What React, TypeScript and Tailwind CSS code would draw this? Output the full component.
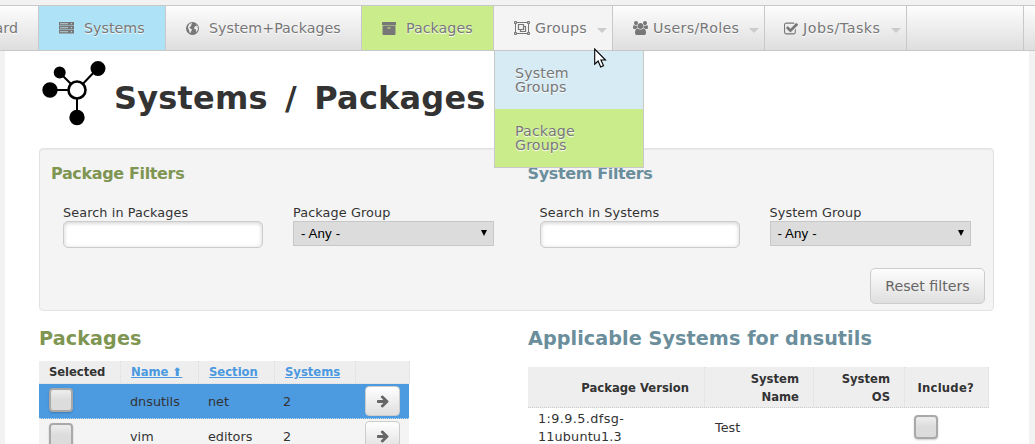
import React from "react";

const ARCHIVE =
  "M1088 832q0-26-19-45t-45-19h-256q-26 0-45 19t-19 45 19 45 45 19h256q26 0 45-19t19-45zm576-192v960q0 26-19 45t-45 19h-1408q-26 0-45-19t-19-45v-960q0-26 19-45t45-19h1408q26 0 45 19t19 45zm64-448v256q0 26-19 45t-45 19h-1536q-26 0-45-19t-19-45v-256q0-26 19-45t45-19h1536q26 0 45 19t19 45z";
const USERS =
  "M593 896q-162 5-265 128h-134q-82 0-138-40.5t-56-118.5q0-353 124-353 6 0 43.5 21t97.5 42.5 119 21.5q67 0 133-23-5 37-5 66 0 139 81 256zm1071 637q0 120-73 189.5t-194 69.5h-874q-121 0-194-69.5t-73-189.5q0-53 3.5-103.5t14-109 26.5-108.5 43-97.5 62-81 85.5-53.5 111.5-20q10 0 43 21.5t73 48 107 48 135 21.5 135-21.5 107-48 73-48 43-21.5q61 0 111.5 20t85.5 53.5 62 81 43 97.5 26.5 108.5 14 109 3.5 103.5zm-1024-1277q0 106-75 181t-181 75-181-75-75-181 75-181 181-75 181 75 75 181zm704 384q0 159-112.5 271.5t-271.5 112.5-271.5-112.5-112.5-271.5 112.5-271.5 271.5-112.5 271.5 112.5 112.5 271.5zm576 225q0 78-56 118.5t-138 40.5h-134q-103-123-265-128 81-117 81-256 0-29-5-66 66 23 133 23 59 0 119-21.5t97.5-42.5 43.5-21q124 0 124 353zm-128-609q0 106-75 181t-181 75-181-75-75-181 75-181 181-75 181 75 75 181z";
const CHECK =
  "M1408 930v318q0 119-84.5 203.5t-203.5 84.5h-832q-119 0-203.5-84.5t-84.5-203.5v-832q0-119 84.5-203.5t203.5-84.5h832q63 0 117 25 15 7 18 23 3 17-9 29l-49 49q-10 10-23 10-3 0-9-2-23-6-45-6h-832q-66 0-113 47t-47 113v832q0 66 47 113t113 47h832q66 0 113-47t47-113v-254q0-13 9-22l64-64q10-10 23-10 6 0 12 3 20 8 20 29zm231-489l-814 814q-24 24-57 24t-57-24l-430-430q-24-24-24-57t24-57l110-110q24-24 57-24t57 24l263 263 647-647q24-24 57-24t57 24l110 110q24 24 24 57t-24 57z";
const ARROW =
  "M1600 960q0 54-37 91l-651 651q-39 37-91 37-51 0-90-37l-75-75q-38-38-38-91t38-91l293-293h-704q-52 0-84.5-37.5t-32.5-90.5v-128q0-53 32.5-90.5t84.5-37.5h704l-293-294q-38-36-38-90t38-90l75-75q38-38 90-38 53 0 91 38l651 651q37 35 37 90z";

function ServerIcon() {
  return (
    <svg className="w-[15px] h-3 shrink-0" viewBox="0 0 15 12" fill="#777">
      {[0, 4, 8].map((y) => (
        <g key={y}>
          <rect x="0" y={y} width="15" height="3.5" />
          <path d={`M1 ${y + 1.7}h8`} stroke="#c5dfe9" strokeWidth="0.8" />
          <circle cx="12.4" cy={y + 1.7} r="0.6" fill="#c5dfe9" />
        </g>
      ))}
    </svg>
  );
}

function GlobeIcon() {
  return (
    <svg className="w-[13px] h-[13px] shrink-0" viewBox="0 0 12 12">
      <circle cx="6" cy="6" r="6" fill="#777" />
      <path
        d="M4.8 1 5.6 1.5 4.8 2.2 5.2 2.9 4.2 3.6 4 4.6 3 4.9 3.6 5.8 5.2 6.6 5.6 7.4 4.6 8.6 4.2 10.2 3.2 9.6 2.9 7.6 2.1 6.2 1.8 4.4Q2.6 1.8 4.8 1zM8.4 1.8 10 3.2 9.6 4 8.6 3.8 7.9 4.7 7.4 5.7 8 6.8 9.2 6.8 9.4 8.4 9 9.6Q10.9 8.2 11.1 6.2L10.6 4.8 10.9 4.4Q10.2 2.4 8.4 1.8z"
        fill="#eee"
      />
    </svg>
  );
}

function ObjectGroupIcon() {
  return (
    <svg className="w-4 h-[14px] shrink-0" viewBox="0 0 16 14" fill="none" stroke="#777">
      <path d="M2 1.5h12M2 12.5h12M1.5 2v10M14.5 2v10" />
      <path d="M.5.5h2v2h-2zM13.5.5h2v2h-2zM.5 11.5h2v2h-2zM13.5 11.5h2v2h-2z" fill="#ccc" />
      <path d="M4.5 3.5h5v5h-5zM9.5 5.5h2v5h-5v-2" strokeWidth="1.2" />
    </svg>
  );
}

function Glyph({ d, box, className }: { d: string; box: string; className: string }) {
  return (
    <svg className={className} viewBox={box} fill="#777">
      <path d={d} />
    </svg>
  );
}

function Caret() {
  return (
    <svg className="w-[10px] h-[5px] shrink-0 mt-[5px]" viewBox="0 0 10 5">
      <path d="M0 0h10L5 5z" fill="#ccc" />
    </svg>
  );
}

function Arrow() {
  return (
    <button className="flex w-[35px] h-[30px] shrink-0 items-center justify-center rounded-[4px] border border-[#ccc] bg-linear-to-b from-white to-[#dfdfdf]">
      <svg className="w-[14px] h-[14px]" viewBox="0 0 1792 1792" fill="#666">
        <path d={ARROW} />
      </svg>
    </button>
  );
}

function Check() {
  return (
    <span className="block size-6 shrink-0 rounded-[4px] border-2 border-[#a9a9a9] bg-linear-to-b from-[#ebebeb] from-10% to-[#dcdcdc] to-50% shadow-[0_1px_2px_rgba(0,0,0,0.2)]" />
  );
}

const cell =
  "flex h-full shrink-0 items-center border-r border-[#c8c8c8] whitespace-nowrap";

function Nav() {
  return (
    <nav className="flex h-[46px] w-full overflow-hidden border-y border-[#c8c8c8] bg-linear-to-b from-[#fdfdfd] to-[#dedede] text-[14.2px] leading-[14px] tracking-[0.05px] text-[#777] [text-shadow:0_1px_1px_#fff]">
      <div className={`${cell} w-[39px] justify-end pr-5`}>Dashboard</div>
      <div className={`${cell} w-[127px] bg-[#aee2f6] pl-5 gap-[10px]`}>
        <ServerIcon />
        <span>Systems</span>
      </div>
      <div className={`${cell} w-[196px] pl-5 gap-[10px]`}>
        <GlobeIcon />
        <span>System+Packages</span>
      </div>
      <div className={`${cell} w-[132px] bg-[#caec8a] pl-5 gap-[10px]`}>
        <Glyph d={ARCHIVE} box="64 128 1664 1536" className="w-[14px] h-[13px] shrink-0" />
        <span>Packages</span>
      </div>
      <div className={`${cell} w-[119px] bg-[#f4f4f4] pl-5`}>
        <ObjectGroupIcon />
        <span className="w-[67px] pl-[5px] tracking-[0.2px]">Groups</span>
        <Caret />
      </div>
      <div className={`${cell} w-[152px] pl-5`}>
        <Glyph d={USERS} box="0 0 1920 1792" className="w-[15px] h-[14px] shrink-0" />
        <span className="w-[101px] pl-[5px] tracking-[0.35px]">Users/Roles</span>
        <Caret />
      </div>
      <div className={`${cell} w-[142px] pl-[19px]`}>
        <Glyph d={CHECK} box="0 64 1664 1536" className="w-[14px] h-[13px] shrink-0" />
        <span className="w-[93px] pl-[5px] tracking-[0.55px]">Jobs/Tasks</span>
        <Caret />
      </div>
      <div className={`${cell} w-[117px]`} />
    </nav>
  );
}

function Logo() {
  return (
    <svg className="w-16 h-[66px] shrink-0" viewBox="0 0 64 66" stroke="#000" strokeWidth="2">
      <path d="M35 30 56 8M35 30 17.5 12.5M35 30H8M35 30V57" />
      <circle cx="56" cy="8.5" r="6.5" />
      <circle cx="17.7" cy="12.5" r="5" />
      <circle cx="8" cy="30" r="6.7" />
      <circle cx="35" cy="57.5" r="6.7" />
      <circle cx="35" cy="30" r="8.5" fill="#fff" strokeWidth="2.6" />
    </svg>
  );
}

function Filter({ title, color, search, group }: { title: string; color: string; search: string; group: string }) {
  return (
    <section className="w-[477px] pl-[11px] pt-[14px]">
      <h3 className={`text-[16px] leading-[22px] font-bold tracking-[-0.36px] ${color}`}>{title}</h3>
      <div className="mt-[19px] flex pl-3 text-[12.8px] leading-[17px] tracking-[0.1px]">
        <label className="w-[230px]">
          {search}
          <input className="block h-[27px] w-[200px] rounded-[5px] border border-[#ccc] bg-white shadow-[inset_0_1px_4px_rgba(0,0,0,0.2)]" />
        </label>
        <label className="w-[201px]">
          {group}
          <span className="flex h-[25px] items-center justify-between border border-[#c8c8c8] bg-[#dcdcdc] pl-[7px] pr-[6px] font-['Liberation_Sans',sans-serif] text-[13.33px] text-black">
            - Any -
            <svg className="w-[6px] h-[6px] mb-[2px]" viewBox="0 0 6 6">
              <path d="M0 0h6L3 6z" />
            </svg>
          </span>
        </label>
      </div>
    </section>
  );
}

const head = "flex items-center border-r border-dotted border-[#ddd]";

function PackagesTable() {
  const rows = [
    ["dnsutils", "net", "2"],
    ["vim", "editors", "2"],
  ];
  return (
    <div className="w-[371px] text-[12.8px]">
      <div className="flex h-[23px] border-b border-dotted border-[#ddd] bg-[#eee] text-[11.6px] font-bold">
        <div className={`${head} w-[82px] pl-[10px] pt-[2px] tracking-[-0.05px]`}>Selected</div>
        <div className={`${head} w-[78px] pl-[10px] pt-[2px] text-[#4a99e0] underline`}>Name ⬆</div>
        <div className={`${head} w-[76px] pl-[10px] pt-[2px] text-[#4a99e0] underline`}>Section</div>
        <div className={`${head} w-[81px] pl-[10px] pt-[2px] text-[#4a99e0] underline`}>Systems</div>
        <div className={`${head} w-[54px]`} />
      </div>
      {rows.map((r, i) => (
        <div
          key={r[0]}
          className={`flex h-[35px] w-[370px] items-center border-b border-dotted border-[#ddd] ${i === 0 ? "bg-[#4c9ae0]" : "bg-[#f4f4f4]"}`}
        >
          <div className="w-[91px] pl-[10px] pb-[2px]">
            <Check />
          </div>
          <div className="w-[78px] pt-[2px]">{r[0]}</div>
          <div className="w-[75px] pt-[2px]">{r[1]}</div>
          <div className="w-[82px] pt-[2px]">{r[2]}</div>
          <Arrow />
        </div>
      ))}
    </div>
  );
}

function SystemsTable() {
  return (
    <div className="w-[461px] text-[12.8px]">
      <div className="flex h-[41px] border-b border-dotted border-[#ccc] bg-[#eee] text-right text-[11.6px] leading-[18px] font-bold">
        <div className={`${head} w-[177px] justify-end pr-[15px] pt-[2px]`}>Package Version</div>
        <div className={`${head} w-[109px] justify-end pr-[14px] pt-[2px]`}>System<br />Name</div>
        <div className={`${head} w-[91px] justify-end pr-[14px] pt-[2px]`}>System<br />OS</div>
        <div className={`${head} w-[84px] justify-end pr-[14px] pt-[2px] tracking-[0.25px]`}>Include?</div>
      </div>
      <div className="flex h-10 items-center leading-[18px]">
        <div className="w-[187px] pl-[10px] tracking-[0.4px]">1:9.9.5.dfsg-<br /><span className="tracking-[0.15px]">11ubuntu1.3</span></div>
        <div className="w-[199px]">Test</div>
        <div className="pb-[2px]">
          <Check />
        </div>
      </div>
    </div>
  );
}

export default function App() {
  return (
    <div className="relative h-[444px] w-[1035px] overflow-hidden bg-[#f2f2f2] pt-[5px] font-['DejaVu_Sans',sans-serif] text-[#333]">
      <Nav />
      <main className="ml-[5px] h-[393px] w-[1024px] bg-white pl-[34px]">
        <header className="flex h-[97px] pl-[3px] pt-[9px]">
          <Logo />
          <h1 className="pl-2 pt-[18px] text-[32px] leading-[40px] font-bold tracking-[0.2px] [word-spacing:6px] whitespace-nowrap">Systems / Packages</h1>
        </header>
        <div className="h-[163px] w-[955px] rounded-[4px] border border-[#e2e2e2] bg-[#f4f4f4] shadow-[inset_0_1px_1px_rgba(0,0,0,0.05)]">
          <div className="flex h-[119px]">
            <Filter title="Package Filters" color="text-[#7f9552]" search="Search in Packages" group="Package Group" />
            <Filter title="System Filters" color="text-[#6b8e9c]" search="Search in Systems" group="System Group" />
          </div>
          <div className="flex justify-end pr-2">
            <button className="h-9 w-[115px] rounded-[5px] border border-[#ccc] bg-linear-to-b from-[#fdfdfd] to-[#dfdfdf] pt-px text-[14.2px] text-[#666]">
              Reset filters
            </button>
          </div>
        </div>
        <div className="flex">
          <section className="w-[489px] pt-[14px]">
            <h2 className="mb-2 text-[19.2px] leading-[28px] font-bold tracking-[0.1px] text-[#7f9552]">Packages</h2>
            <PackagesTable />
          </section>
          <section className="pt-[14px]">
            <h2 className="mb-[14px] text-[19.2px] leading-[28px] font-bold tracking-[0.07px] text-[#6b8e9c]">Applicable Systems for dnsutils</h2>
            <SystemsTable />
          </section>
        </div>
      </main>
      <div className="absolute left-[494px] top-[51px] w-[150px] border border-t-0 border-[#c8c8c8] text-[14.2px] leading-[14px] tracking-[0.15px] text-[#777] [text-shadow:0_1px_1px_#fff]">
        <div className="flex h-[58px] items-center bg-[#d6ebf4] pl-5">System<br />Groups</div>
        <div className="flex h-[58px] items-center bg-[#caec8a] pl-5">Package<br />Groups</div>
      </div>
      <svg className="absolute left-[594px] top-[48px] h-[21px] w-[13px]" viewBox="0 0 13 21">
        <path d="M.7 1v15.2l3.4-3.2 2.6 6 2.8-1.2-2.6-5.8h4.6z" fill="#fff" stroke="#000" strokeWidth="1.1" />
      </svg>
    </div>
  );
}
